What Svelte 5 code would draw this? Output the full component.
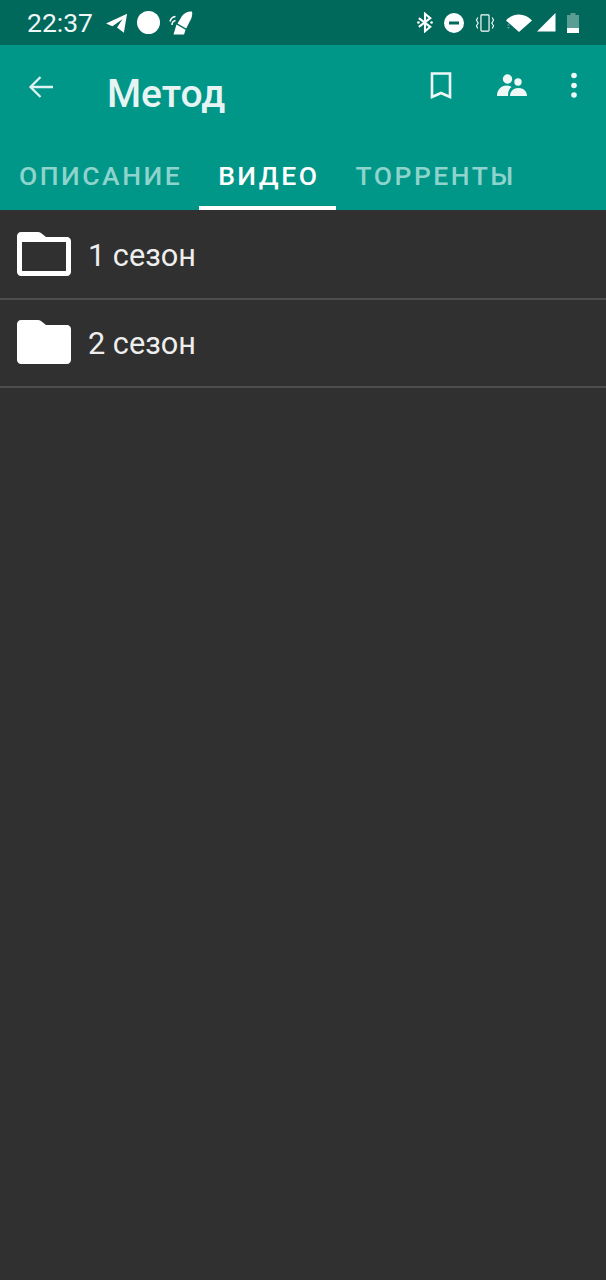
<script>
  const tabs = [
    { label: 'ОПИСАНИЕ', active: false },
    { label: 'ВИДЕО', active: true },
    { label: 'ТОРРЕНТЫ', active: false }
  ];

  const seasons = [
    { title: '1 сезон', open: true },
    { title: '2 сезон', open: false }
  ];
</script>

<div class="page">
  <div class="status">
    <div class="status-left">
      <span class="clock">22:37</span>
      <svg class="telegram" viewBox="0 0 24 24" width="22" height="22"><path d="M0 12.500 23 2 19.500 22.500 12 17 18 8 7 15.500z" fill="#fff"/></svg>
      <span class="dot"></span>
      <svg class="rocket" viewBox="0 0 24 24" width="24" height="24">
        <path d="M23 .5c.8 3-.2 6.500-2 9.500l-3.800 7.500-8.700-5 4.500-7.500C15 2 19 .2 23 .5z" fill="#fff"/>
        <path d="M7.500 13.500 16.500 18.800 15 23.500 4.500 23.500z" fill="#fff"/>
        <path d="M1 10.500a6.500 6.500 0 0 1 5.500-5M3 14a4.500 4.500 0 0 1 3.500-4.500" fill="none" stroke="#fff" stroke-width="1.500"/>
      </svg>
    </div>
    <div class="status-right">
      <svg viewBox="0 0 18 24" width="16" height="21"><path d="M2 7 15 17l-6 5V2l6 5L2 17" fill="none" stroke="#fff" stroke-width="2.400"/><circle cx="1.500" cy="12" r="1.500" fill="#fff"/><circle cx="16.500" cy="12" r="1.500" fill="#fff"/></svg>
      <svg viewBox="0 0 20 20" width="20" height="20"><circle cx="10" cy="10" r="10" fill="#fff"/><rect x="5" y="8.500" width="10" height="3" fill="#00695c"/></svg>
      <svg viewBox="0 0 22 20" width="20" height="18"><rect x="6.500" y="1" width="9" height="18" rx="1" fill="none" stroke="#fff" stroke-width="1.300"/><path d="M3 4 1.500 7 3.500 10 1.500 13 3 16M19 4l1.500 3-2 3 2 3L19 16" fill="none" stroke="#fff" stroke-width="1.200"/></svg>
      <svg class="wifi" viewBox="0 0 26 18" width="26" height="18"><path d="M0 6.500C7-1.500 19-1.500 26 6.500L13 18z" fill="#fff"/><path d="M1 11.500 2.500 9.500 4 11.500zM1 13 2.500 15 4 13z" fill="#fff" opacity=".35"/></svg>
      <svg viewBox="0 0 20 20" width="19" height="19"><path d="M0 19.500 19.500 0v19.500z" fill="#fff"/></svg>
      <svg viewBox="0 0 12 20" width="12" height="20"><path d="M3.500 0h5v2H12v18H0V2h3.500z" fill="#fff" opacity=".35"/><rect y="15" width="12" height="5" fill="#fff"/></svg>
    </div>
  </div>

  <header class="appbar">
    <div class="toolbar">
      <button class="back" aria-label="Назад">
        <svg viewBox="0 0 26 24" width="26" height="24"><path d="M25 12H3M12.500 2 2.500 12l10 10" fill="none" stroke="#e0f2f1" stroke-width="2.300"/></svg>
      </button>
      <h1>Метод</h1>
      <div class="actions">
        <svg class="bookmark" viewBox="0 0 22 28" width="22" height="28"><path d="M2 1.500h18V25l-9-4-9 4z" fill="none" stroke="#eef8f7" stroke-width="2.600"/></svg>
        <svg class="people" viewBox="0 0 30 24" width="30" height="24" fill="#eef8f7">
          <circle cx="10.500" cy="5" r="4.700"/><circle cx="21" cy="8" r="3.700"/>
          <path d="M0 22c0-6 4-10.500 9.500-10.500 2 0 4 .5 5 1.500-2.500 1.700-3.500 5-3.500 9z"/>
          <path d="M13 22c0-4.500 3.500-8 8.500-8s8.500 3.500 8.500 8z"/>
        </svg>
        <svg class="more" viewBox="0 -2 8 28" width="8" height="28" fill="#eef8f7"><circle cx="4" cy="1.500" r="2.800"/><circle cx="4" cy="11.500" r="2.800"/><circle cx="4" cy="21" r="2.800"/></svg>
      </div>
    </div>
    <nav class="tabs">
      {#each tabs as tab}
        <div class="tab" class:active={tab.active}>{tab.label}</div>
      {/each}
    </nav>
  </header>

  <main>
    {#each seasons as s}
      <div class="row">
        <svg class="folder" viewBox="0 0 54 44" width="54" height="44">
          {#if s.open}
            <path fill-rule="evenodd" d="M4 0h17c1 0 2 .4 3 1l5 4h21c2.200 0 4 1.800 4 4v31c0 2.200-1.800 4-4 4H4c-2.200 0-4-1.800-4-4V4c0-2.200 1.800-4 4-4zM5 10v29h44V10z" fill="#fff"/>
          {:else}
            <path d="M4 0h17c1 0 2 .4 3 1l5 4h21c2.200 0 4 1.800 4 4v31c0 2.200-1.800 4-4 4H4c-2.200 0-4-1.800-4-4V4c0-2.200 1.800-4 4-4z" fill="#fff"/>
          {/if}
        </svg>
        <span>{s.title}</span>
      </div>
    {/each}
  </main>
</div>

<style>
  :global(body) {
    margin: 0;
    background: #303030;
  }

  .page {
    width: 606px;
    height: 1280px;
    background: #303030;
    font-family: Roboto, "Liberation Sans", sans-serif;
    overflow: hidden;
  }

  .status {
    height: 45px;
    background: #00695c;
    display: flex;
    align-items: center;
    justify-content: space-between;
    padding: 0 27px;
    color: #fff;
  }

  .status-left,
  .status-right {
    display: flex;
    align-items: center;
  }

  .status-left {
    gap: 9px;
  }

  .status-right {
    gap: 11px;
  }

  .status-right svg:nth-child(5) {
    margin-left: -6px;
  }

  .clock {
    font-size: 26.500px;
    margin-right: 4px;
    color: #eef8f7;
  }

  .dot {
    width: 23px;
    height: 23px;
    border-radius: 50%;
    background: #fff;
  }

  .appbar {
    background: #009688;
  }

  .toolbar {
    height: 105px;
    display: flex;
    align-items: flex-start;
  }

  .back {
    width: 107px;
    padding: 30px 0 0 28px;
    margin: 0;
    border: 0;
    background: none;
    text-align: left;
  }

  h1 {
    margin: 0;
    padding-top: 27px;
    font-size: 39px;
    line-height: 44px;
    font-weight: 500;
    color: #e6f4f3;
  }

  .actions {
    margin-left: auto;
    padding: 27px 28px 0 0;
    display: flex;
    align-items: center;
  }

  .people {
    margin-left: 45px;
  }

  .more {
    margin-left: 43px;
  }

  .tabs {
    height: 60px;
    display: flex;
  }

  .tab {
    padding: 10px 17px 0 19px;
    height: 50px;
    line-height: 32px;
    font-size: 26.500px;
    font-weight: 500;
    letter-spacing: 2.500px;
    color: #8ed3cc;
  }

  .tab.active {
    color: #fff;
    border-bottom: 4px solid #fff;
    height: 46px;
  }

  main {
    padding-top: 2px;
  }

  .row {
    box-sizing: border-box;
    height: 88px;
    display: flex;
    align-items: center;
    gap: 17px;
    padding-left: 17px;
    border-bottom: 2px solid #4e4e4e;
    color: #eeeeee;
    font-size: 30.700px;
  }

  .folder {
    margin-bottom: 2px;
  }
</style>
